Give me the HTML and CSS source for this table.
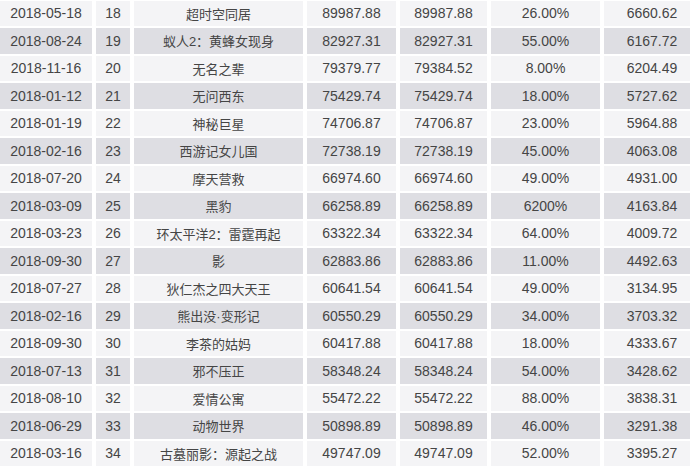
FILE: index.html
```html
<!DOCTYPE html>
<html lang="zh">
<head>
<meta charset="utf-8">
<link rel="stylesheet" href="styles.css">
</head>
<body>
<div class="table">
  <div class="row"><div class="c">2018-05-18</div><div class="c">18</div><div class="c name">超时空同居</div><div class="c">89987.88</div><div class="c">89987.88</div><div class="c">26.00%</div><div class="c">6660.62</div></div>
  <div class="row alt"><div class="c">2018-08-24</div><div class="c">19</div><div class="c name">蚁人2：黄蜂女现身</div><div class="c">82927.31</div><div class="c">82927.31</div><div class="c">55.00%</div><div class="c">6167.72</div></div>
  <div class="row"><div class="c">2018-11-16</div><div class="c">20</div><div class="c name">无名之辈</div><div class="c">79379.77</div><div class="c">79384.52</div><div class="c">8.00%</div><div class="c">6204.49</div></div>
  <div class="row alt"><div class="c">2018-01-12</div><div class="c">21</div><div class="c name">无问西东</div><div class="c">75429.74</div><div class="c">75429.74</div><div class="c">18.00%</div><div class="c">5727.62</div></div>
  <div class="row"><div class="c">2018-01-19</div><div class="c">22</div><div class="c name">神秘巨星</div><div class="c">74706.87</div><div class="c">74706.87</div><div class="c">23.00%</div><div class="c">5964.88</div></div>
  <div class="row alt"><div class="c">2018-02-16</div><div class="c">23</div><div class="c name">西游记女儿国</div><div class="c">72738.19</div><div class="c">72738.19</div><div class="c">45.00%</div><div class="c">4063.08</div></div>
  <div class="row"><div class="c">2018-07-20</div><div class="c">24</div><div class="c name">摩天营救</div><div class="c">66974.60</div><div class="c">66974.60</div><div class="c">49.00%</div><div class="c">4931.00</div></div>
  <div class="row alt"><div class="c">2018-03-09</div><div class="c">25</div><div class="c name">黑豹</div><div class="c">66258.89</div><div class="c">66258.89</div><div class="c">6200%</div><div class="c">4163.84</div></div>
  <div class="row"><div class="c">2018-03-23</div><div class="c">26</div><div class="c name">环太平洋2：雷霆再起</div><div class="c">63322.34</div><div class="c">63322.34</div><div class="c">64.00%</div><div class="c">4009.72</div></div>
  <div class="row alt"><div class="c">2018-09-30</div><div class="c">27</div><div class="c name">影</div><div class="c">62883.86</div><div class="c">62883.86</div><div class="c">11.00%</div><div class="c">4492.63</div></div>
  <div class="row"><div class="c">2018-07-27</div><div class="c">28</div><div class="c name">狄仁杰之四大天王</div><div class="c">60641.54</div><div class="c">60641.54</div><div class="c">49.00%</div><div class="c">3134.95</div></div>
  <div class="row alt"><div class="c">2018-02-16</div><div class="c">29</div><div class="c name">熊出没·变形记</div><div class="c">60550.29</div><div class="c">60550.29</div><div class="c">34.00%</div><div class="c">3703.32</div></div>
  <div class="row"><div class="c">2018-09-30</div><div class="c">30</div><div class="c name">李茶的姑妈</div><div class="c">60417.88</div><div class="c">60417.88</div><div class="c">18.00%</div><div class="c">4333.67</div></div>
  <div class="row alt"><div class="c">2018-07-13</div><div class="c">31</div><div class="c name">邪不压正</div><div class="c">58348.24</div><div class="c">58348.24</div><div class="c">54.00%</div><div class="c">3428.62</div></div>
  <div class="row"><div class="c">2018-08-10</div><div class="c">32</div><div class="c name">爱情公寓</div><div class="c">55472.22</div><div class="c">55472.22</div><div class="c">88.00%</div><div class="c">3838.31</div></div>
  <div class="row alt"><div class="c">2018-06-29</div><div class="c">33</div><div class="c name">动物世界</div><div class="c">50898.89</div><div class="c">50898.89</div><div class="c">46.00%</div><div class="c">3291.38</div></div>
  <div class="row"><div class="c">2018-03-16</div><div class="c">34</div><div class="c name">古墓丽影：源起之战</div><div class="c">49747.09</div><div class="c">49747.09</div><div class="c">52.00%</div><div class="c">3395.27</div></div>
</div>
</body>
</html>
```
FILE: styles.css
```css
html, body {
  margin: 0;
  padding: 0;
  background: #ffffff;
  overflow: hidden;
}
.table {
  display: flex;
  flex-direction: column;
  gap: 2px;
  width: 700px;
  padding-top: 0.5px;
  font-family: "Liberation Sans", "Noto Sans CJK SC", sans-serif;
  font-size: 14px;
  color: #454545;
}
.row {
  display: grid;
  grid-template-columns: 92px 34px 169px 89px 87px 109px 96px;
  column-gap: 4px;
  height: 25.5px;
}
.c {
  background: #f4f4f6;
  display: flex;
  align-items: center;
  justify-content: center;
  white-space: nowrap;
}
.alt .c {
  background: #dedee3;
}
.name {
  font-family: "Liberation Sans", "Noto Sans CJK SC", sans-serif;
  font-size: 13px;
}
```
